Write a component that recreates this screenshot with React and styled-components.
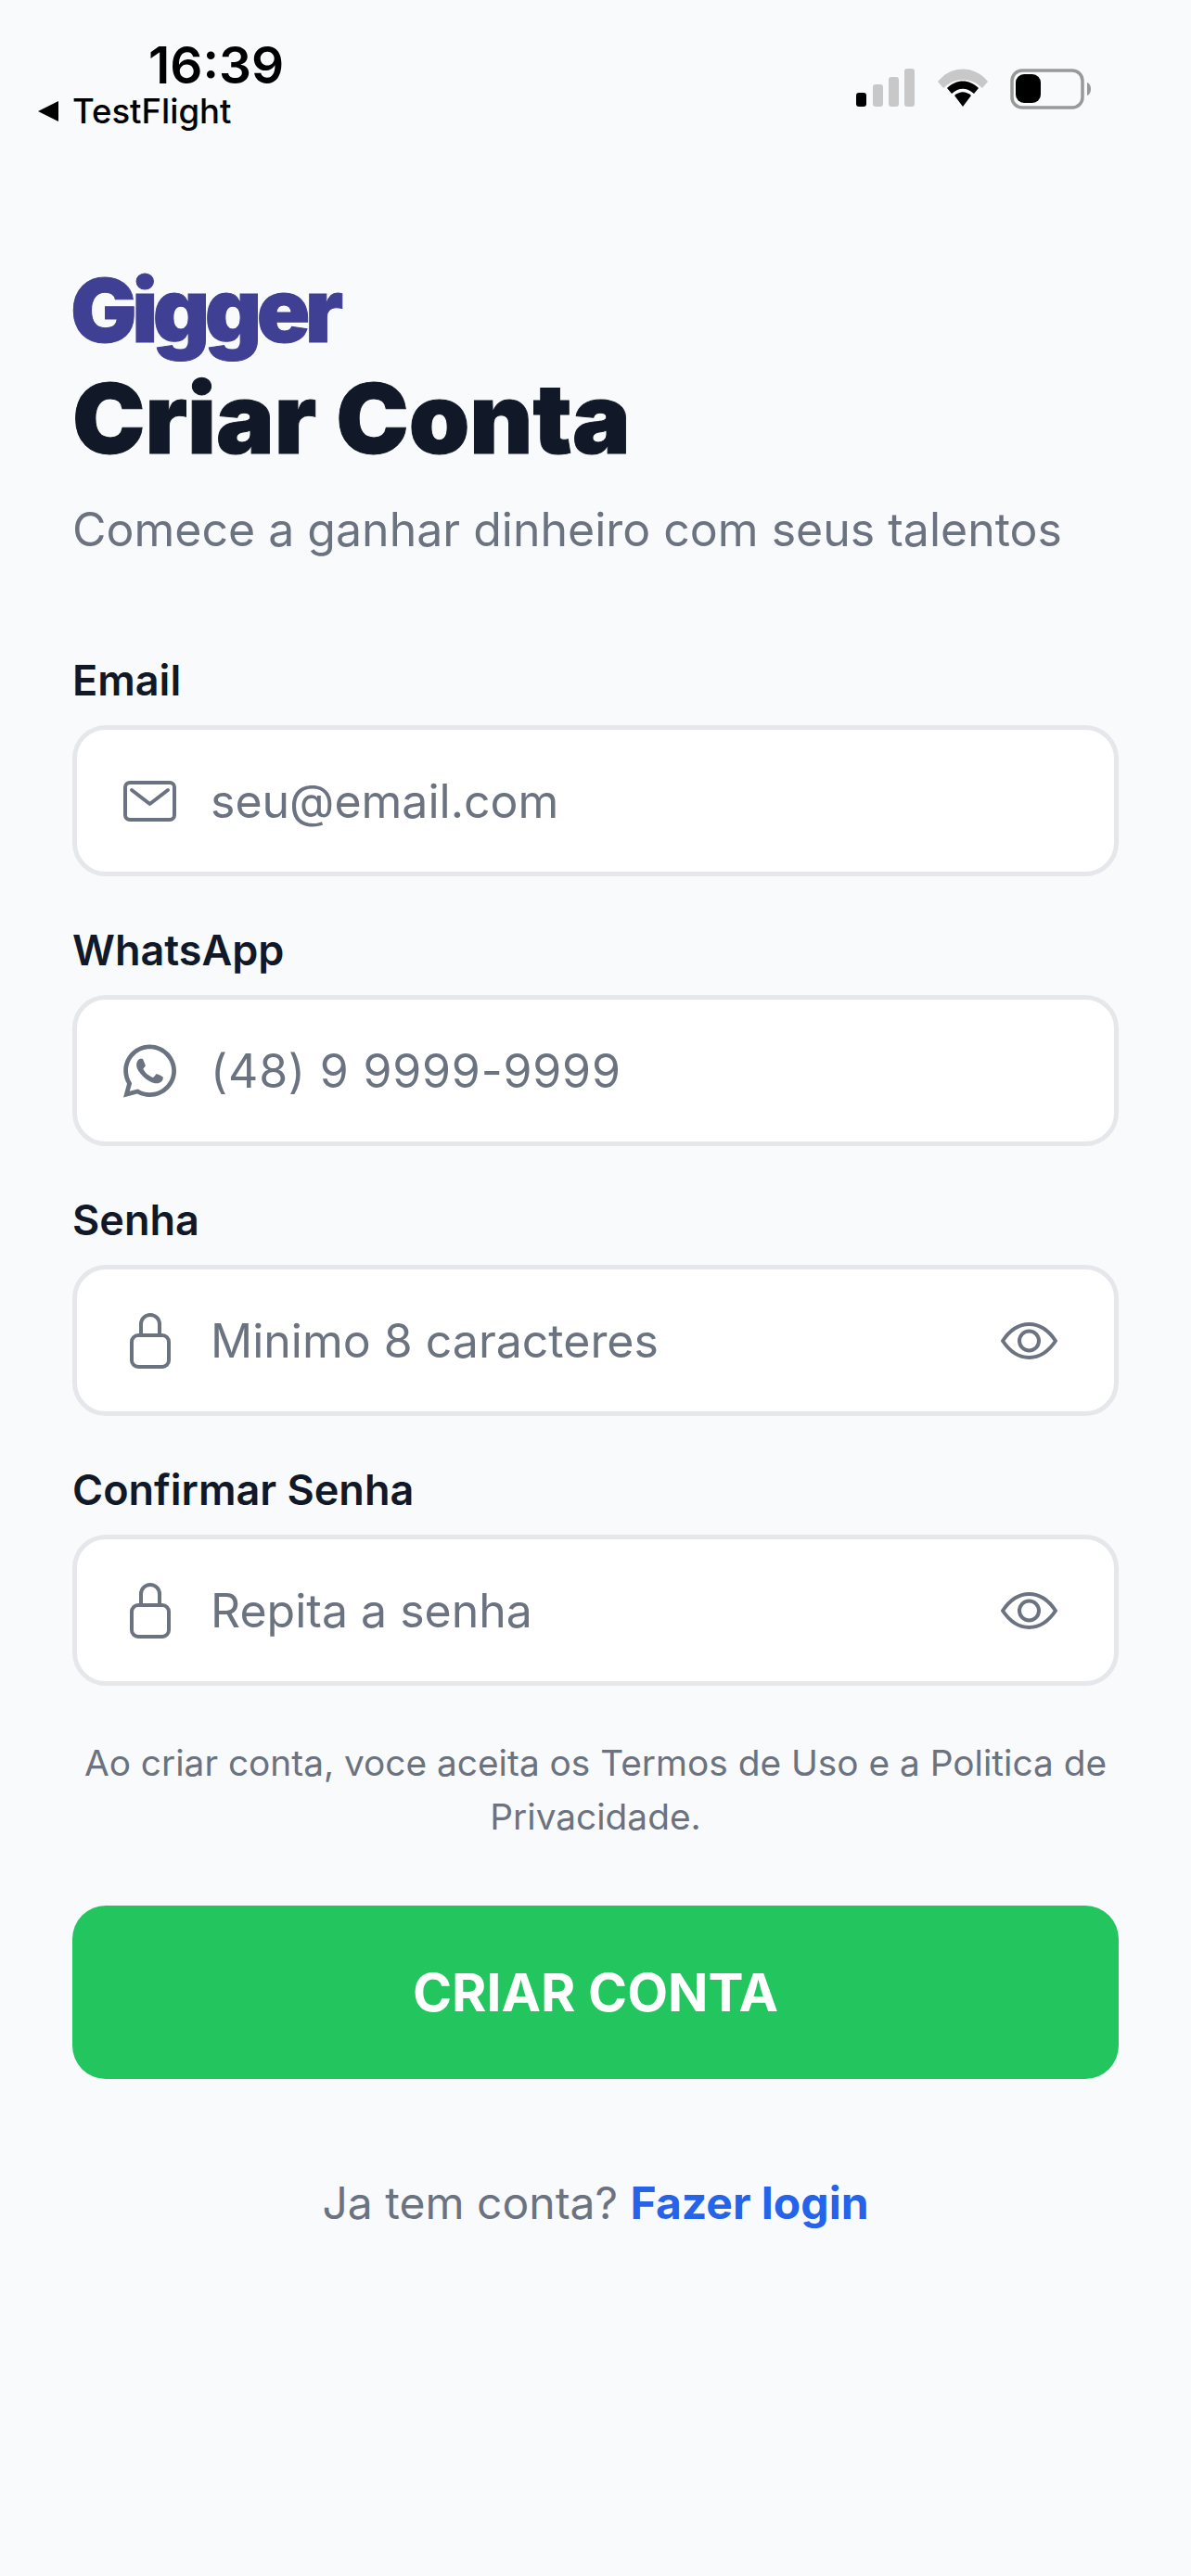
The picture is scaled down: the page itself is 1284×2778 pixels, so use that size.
import styled, { createGlobalStyle } from "styled-components";
import { FaWhatsapp } from "react-icons/fa";

const GlobalStyle = createGlobalStyle`
  html, body {
    margin: 0;
    padding: 0;
    background: #f9fafb;
  }
  * {
    box-sizing: border-box;
  }
`;

const Page = styled.div`
  width: 1284px;
  height: 2778px;
  background: #f9fafb;
  font-family: Inter, "Liberation Sans", sans-serif;
  overflow: hidden;
`;

const StatusBar = styled.div`
  height: 148px;
  padding: 40px 0 0 40px;
  display: flex;
  justify-content: space-between;
`;

const StatusLeft = styled.div`
  display: flex;
  flex-direction: column;
`;

const Time = styled.div`
  margin-left: 120px;
  font-size: 55px;
  line-height: 60px;
  font-weight: 600;
  color: #000;
`;

const BackRow = styled.div`
  display: flex;
  align-items: center;
  gap: 14px;
  font-size: 36.5px;
  line-height: 40px;
  font-weight: 500;
  color: #000;
`;

const StatusRight = styled.div`
  display: flex;
  align-items: flex-start;
  gap: 24px;
  padding: 34px 107px 0 0;
`;

const Content = styled.div`
  padding: 0 78px;
`;

const Logo = styled.div`
  margin: 137px 0 0 -2px;
  font-size: 95px;
  line-height: 100px;
  font-weight: 900;
  letter-spacing: -5.5px;
  color: #3f3f94;
  -webkit-text-stroke: 1px #3f3f94;
`;

const Title = styled.h1`
  margin: 8px 0 0;
  font-size: 105px;
  line-height: 116px;
  font-weight: 900;
  color: #111827;
  -webkit-text-stroke: 1px #111827;
`;

const Subtitle = styled.p`
  margin: 28px 0 0;
  font-size: 50px;
  line-height: 68px;
  font-weight: 400;
  color: #6b7280;
`;

const Form = styled.form`
  margin-top: 104px;
  display: flex;
  flex-direction: column;
  gap: 55px;
`;

const Field = styled.div`
  display: flex;
  flex-direction: column;
  gap: 23px;
`;

const Label = styled.label`
  font-size: 45px;
  line-height: 50px;
  font-weight: 600;
  color: #111827;
`;

const InputBox = styled.div`
  height: 163px;
  padding: 0 61px 0 50px;
  display: flex;
  align-items: center;
  gap: 37px;
  background: #fff;
  border: 5px solid #e5e7eb;
  border-radius: 36px;
`;

const IconSlot = styled.span`
  width: 57px;
  display: flex;
  align-items: center;
  justify-content: center;
`;

const Placeholder = styled.span`
  flex: 1;
  font-size: 50px;
  font-weight: 400;
  letter-spacing: ${(props) => props.$spacing || "0"};
  color: #6b7280;
`;

const Terms = styled.p`
  margin: 54px 0 0;
  text-align: center;
  font-size: 38.8px;
  line-height: 58px;
  color: #6b7280;
`;

const SubmitButton = styled.button`
  margin-top: 67px;
  width: 100%;
  height: 187px;
  border: none;
  border-radius: 36px;
  background: #22c55e;
  color: #fff;
  font-family: inherit;
  font-size: 57px;
  font-weight: 700;
`;

const LoginRow = styled.p`
  margin: 104px 0 0;
  text-align: center;
  font-size: 48px;
  line-height: 60px;
  color: #6b7280;
`;

const LoginLink = styled.a`
  font-weight: 700;
  color: #2563eb;
`;

const MailIcon = () => (
  <svg width="57" height="44" viewBox="0 0 57 44" fill="none" stroke="#6b7280" strokeWidth="4" strokeLinecap="round" strokeLinejoin="round">
    <rect x="2" y="2" width="53" height="40" rx="5" />
    <path d="M9 10l19.5 15L48 10" />
  </svg>
);

const LockIcon = () => (
  <svg width="44" height="60" viewBox="0 0 44 60" fill="none" stroke="#6b7280" strokeWidth="4" strokeLinejoin="round">
    <rect x="2" y="24" width="40" height="34" rx="7" />
    <path d="M12 24V12a10 10 0 0 1 20 0v12" />
  </svg>
);

const EyeIcon = () => (
  <svg width="61" height="40" viewBox="0 0 61 40" fill="none" stroke="#6b7280" strokeWidth="4">
    <path d="M2 20C10 8 20 2 30.5 2S51 8 59 20c-8 12-18 18-28.5 18S10 32 2 20z" strokeLinejoin="round" />
    <circle cx="30.5" cy="20" r="10.5" />
  </svg>
);

const SignalIcon = () => (
  <svg width="64" height="41" viewBox="0 0 64 41">
    <rect x="0" y="26" width="11" height="15" rx="3" fill="#000" />
    <rect x="18" y="17" width="11" height="24" rx="3" fill="#c8c8c8" />
    <rect x="35" y="9" width="11" height="32" rx="3" fill="#c8c8c8" />
    <rect x="52" y="0" width="11" height="41" rx="3" fill="#c8c8c8" />
  </svg>
);

const WifiIcon = () => (
  <svg width="54" height="41" viewBox="0 0 54 41">
    <path d="M0 14C14 -4 40 -4 54 14l-6 7C36 9 18 9 6 21z" fill="#c8c8c8" />
    <path d="M10 21C20 11 34 11 44 21l-5 6C31 20 23 20 15 27z" fill="#000" />
    <path d="M18 29c6-5 12-5 18 0L27 41z" fill="#000" />
  </svg>
);

const BatteryIcon = () => (
  <svg width="88" height="44" viewBox="0 0 88 44">
    <rect x="2" y="2" width="76" height="40" rx="11" fill="none" stroke="#999" strokeWidth="3.5" />
    <rect x="6" y="6" width="27" height="31" rx="9" fill="#000" />
    <path d="M83 15c3 1 4 4 4 7s-1 6-4 7z" fill="#999" />
  </svg>
);

const BackArrow = () => (
  <svg width="24" height="24" viewBox="0 0 24 24">
    <path d="M23 1v22L1 12z" fill="#000" />
  </svg>
);

const fields = [
  { label: "Email", placeholder: "seu@email.com", icon: <MailIcon /> },
  { label: "WhatsApp", placeholder: "(48) 9 9999-9999", icon: <FaWhatsapp size={66} color="#6b7280" />, spacing: "0.8px" },
  { label: "Senha", placeholder: "Minimo 8 caracteres", icon: <LockIcon />, eye: true },
  { label: "Confirmar Senha", placeholder: "Repita a senha", icon: <LockIcon />, eye: true },
];

const App = () => {
  return (
    <Page>
      <GlobalStyle />
      <StatusBar>
        <StatusLeft>
          <Time>16:39</Time>
          <BackRow>
            <BackArrow />
            TestFlight
          </BackRow>
        </StatusLeft>
        <StatusRight>
          <SignalIcon />
          <WifiIcon />
          <BatteryIcon />
        </StatusRight>
      </StatusBar>
      <Content>
        <Logo>Gigger</Logo>
        <Title>Criar Conta</Title>
        <Subtitle>Comece a ganhar dinheiro com seus talentos</Subtitle>
        <Form>
          {fields.map((field) => (
            <Field key={field.label}>
              <Label>{field.label}</Label>
              <InputBox>
                <IconSlot>{field.icon}</IconSlot>
                <Placeholder $spacing={field.spacing}>{field.placeholder}</Placeholder>
                {field.eye && <EyeIcon />}
              </InputBox>
            </Field>
          ))}
        </Form>
        <Terms>Ao criar conta, voce aceita os Termos de Uso e a Politica de Privacidade.</Terms>
        <SubmitButton type="button">CRIAR CONTA</SubmitButton>
        <LoginRow>
          Ja tem conta? <LoginLink>Fazer login</LoginLink>
        </LoginRow>
      </Content>
    </Page>
  );
};

export default App;
